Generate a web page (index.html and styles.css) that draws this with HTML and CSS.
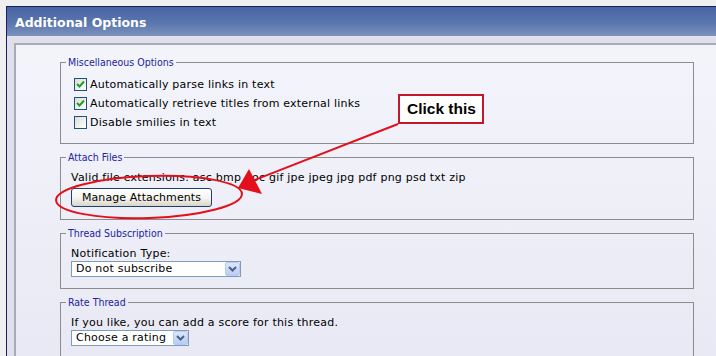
FILE: index.html
```html
<!DOCTYPE html>
<html lang="en">
<head>
  <meta charset="UTF-8">
  <title>Additional Options</title>
  <link rel="stylesheet" href="styles.css">
</head>
<body>
  <div class="panel">
    <div class="panel-head">Additional Options</div>
    <div class="panel-body">
      <div class="panel-inner">

        <fieldset class="group">
          <legend>Miscellaneous Options</legend>
          <label class="check-row">
            <span class="checkbox"><svg width="11" height="11" viewBox="0 0 11 11"><path d="M2 5 L4.5 7.5 L9 2.5" fill="none" stroke="#21a121" stroke-width="2"/></svg></span>
            Automatically parse links in text
          </label>
          <label class="check-row">
            <span class="checkbox"><svg width="11" height="11" viewBox="0 0 11 11"><path d="M2 5 L4.5 7.5 L9 2.5" fill="none" stroke="#21a121" stroke-width="2"/></svg></span>
            Automatically retrieve titles from external links
          </label>
          <label class="check-row">
            <span class="checkbox"></span>
            Disable smilies in text
          </label>
        </fieldset>

        <fieldset class="group">
          <legend>Attach Files</legend>
          <div class="line">Valid file extensions: asc bmp doc gif jpe jpeg jpg pdf png psd txt zip</div>
          <button class="btn">Manage Attachments</button>
        </fieldset>

        <fieldset class="group">
          <legend>Thread Subscription</legend>
          <div class="line">Notification Type:</div>
          <div class="select select-wide">
            <span class="select-text">Do not subscribe</span>
            <span class="select-arrow"><svg width="9" height="6" viewBox="0 0 9 6"><path d="M1 1 L4.5 4.5 L8 1" fill="none" stroke="#4d6185" stroke-width="2"/></svg></span>
          </div>
        </fieldset>

        <fieldset class="group">
          <legend>Rate Thread</legend>
          <div class="line">If you like, you can add a score for this thread.</div>
          <div class="select select-narrow">
            <span class="select-text">Choose a rating</span>
            <span class="select-arrow"><svg width="9" height="6" viewBox="0 0 9 6"><path d="M1 1 L4.5 4.5 L8 1" fill="none" stroke="#4d6185" stroke-width="2"/></svg></span>
          </div>
        </fieldset>

      </div>
    </div>
  </div>

  <!-- annotation drawn over the screenshot -->
  <svg class="marks" width="716" height="356" viewBox="0 0 716 356">
    <ellipse cx="149" cy="197" rx="93" ry="21" transform="rotate(-2 149 197)" fill="none" stroke="#e3101c" stroke-width="2"/>
    <line x1="398" y1="124" x2="252" y2="181" stroke="#e3101c" stroke-width="2"/>
    <polygon points="238,188 249,169 262,194" fill="#e3101c"/>
  </svg>
  <div class="callout">Click this</div>
</body>
</html>
```

FILE: styles.css
```css
body {
  margin: 0;
  background-color: #efefef;
  font-family: "DejaVu Sans", Verdana, sans-serif;
  font-size: 11px;
  color: #000;
  height: 356px;
  overflow: hidden;
  position: relative;
}
.panel {
  margin: 6px 0 0 6px;
  border-top: 1px solid #1d1d5c;
  border-left: 1px solid #1d1d5c;
}
.panel-head {
  height: 29px;
  box-sizing: border-box;
  padding: 2px 8px 0;
  line-height: 27px;
  background: linear-gradient(#4865a3, #5a76ae 55%, #7d93be);
  color: #fff;
  font-weight: bold;
  font-size: 12.5px;
}
.panel-body {
  background-color: #dfe0ec;
  padding: 7px 0 0 7px;
}
.panel-inner {
  border-top: 2px solid #a9abb7;
  border-left: 2px solid #a9abb7;
  background: linear-gradient(#f4f5fb, #e8e9f4 300px);
  padding: 11px 22px 0 44px;
  letter-spacing: 0.22px;
}
.group {
  margin: 0 0 7px;
  border: 1px solid #8c8c8c;
  padding: 6px 10px 11px;
}
.group legend {
  font-family: "DejaVu Sans Condensed", "DejaVu Sans", sans-serif;
  font-size: 10.5px;
  line-height: 13px;
  letter-spacing: 0;
  color: #2323a0;
  padding: 0 2px;
  margin-left: -5px;
}
.check-row {
  display: flex;
  align-items: center;
  height: 19px;
  gap: 3px;
}
.checkbox {
  width: 13px;
  height: 13px;
  box-sizing: border-box;
  margin-left: 3px;
  border: 1px solid #1c5180;
  background: linear-gradient(135deg, #dcdcd7, #ffffff);
  display: flex;
  align-items: center;
  justify-content: center;
}
.line {
  line-height: 15px;
}
.btn {
  display: block;
  width: 141px;
  height: 19px;
  margin: 3px 0 1px;
  padding: 0;
  border: 1px solid #1f3f73;
  border-radius: 3px;
  background: linear-gradient(#ffffff, #f4f3ef 55%, #d9d5ca);
  font-family: "DejaVu Sans", Verdana, sans-serif;
  font-size: 11px;
  letter-spacing: 0.1px;
  color: #000;
}
.select {
  display: flex;
  align-items: center;
  height: 16px;
  box-sizing: border-box;
  border: 1px solid #7f9db9;
  background-color: #fff;
}
.select-wide { width: 170px; }
.select-narrow { width: 118px; }
.select-text {
  flex: 1;
  padding-left: 4px;
  line-height: 14px;
}
.select-arrow {
  width: 15px;
  height: 14px;
  box-sizing: border-box;
  border: 1px solid #b9caee;
  border-radius: 2px;
  background: linear-gradient(#dce6fd, #b8ccf5);
  display: flex;
  align-items: center;
  justify-content: center;
}
.marks {
  position: absolute;
  top: 0;
  left: 0;
  pointer-events: none;
}
.callout {
  position: absolute;
  left: 398px;
  top: 94px;
  width: 86px;
  height: 30px;
  box-sizing: border-box;
  border: 2px solid #c4172c;
  background-color: #fff;
  padding-left: 7px;
  font-family: "Liberation Sans", Arial, sans-serif;
  font-weight: bold;
  font-size: 15.5px;
  line-height: 26px;
}
```
